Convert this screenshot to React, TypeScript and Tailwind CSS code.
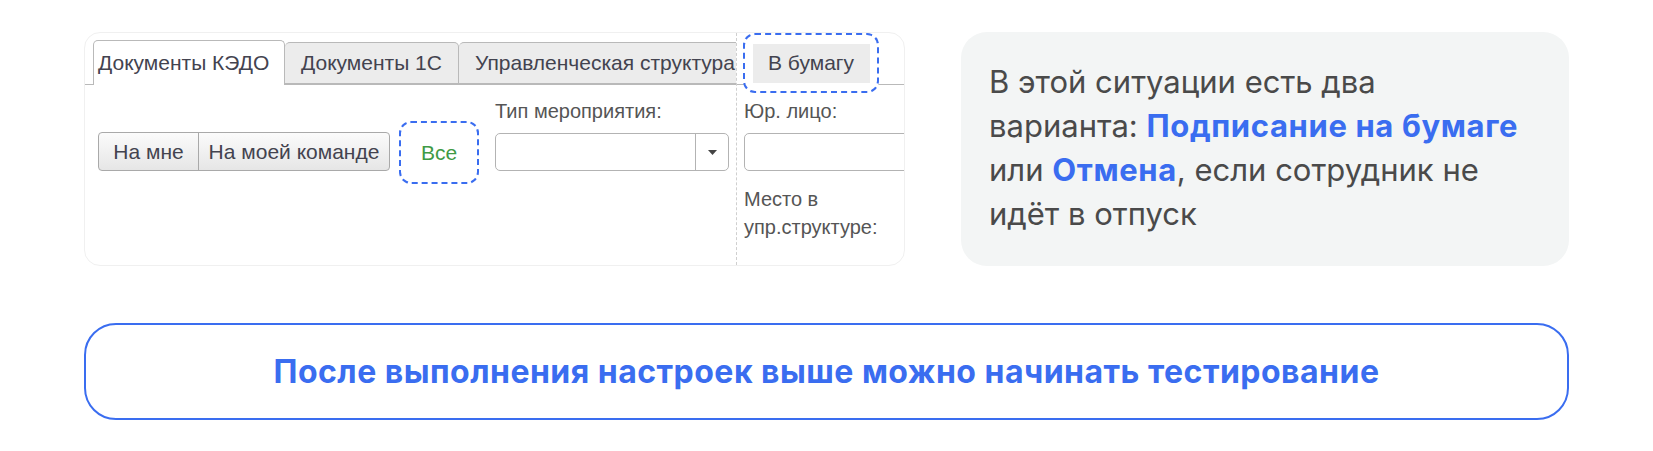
const Tab = ({ label, active, className = "" }: { label: string; active?: boolean; className?: string }) => (
  <div
    className={
      active
        ? `relative z-10 -mb-px flex h-[45px] items-center whitespace-nowrap rounded-t-[5px] border border-b-0 border-[#b9b9b9] bg-white pl-[4px] ${className}`
        : `flex h-[42px] items-center overflow-hidden whitespace-nowrap rounded-t-[5px] border border-l-0 border-[#b9b9b9] bg-[#ececec] ${className}`
    }
  >
    {label}
  </div>
);

const OneCScreen = () => {
  return (
    <div className="flex h-[234px] w-[821px] shrink-0 overflow-hidden rounded-[16px] border border-[#f0f0f0] bg-white font-['Liberation_Sans',Arial,sans-serif] text-[21px] text-[#43434f]">
      {/* left side: tabs + filters */}
      <div className="flex w-[651px] shrink-0 flex-col">
        <div className="flex h-[52px] items-end border-b border-[#b9b9b9] pl-[8px]">
          <Tab label="Документы КЭДО" active className="w-[192px]" />
          <Tab label="Документы 1С" className="w-[174px] pl-[16px]" />
          <Tab label="Управленческая структура" className="min-w-0 flex-1 rounded-tr-none border-r-0 pl-[16px]" />
        </div>
        <div className="flex items-start pl-[13px] pt-[10px]">
          <div className="mt-[37px] flex h-[39px] rounded-[4px] border border-[#a9a9a9] bg-gradient-to-b from-[#fbfbfb] to-[#e6e6e6]">
            <div className="flex w-[100px] items-center justify-center border-r border-[#a9a9a9]">На мне</div>
            <div className="flex w-[190px] items-center justify-center whitespace-nowrap">На моей команде</div>
          </div>
          <div className="ml-[9px] mt-[26px] flex h-[63px] w-[80px] shrink-0 items-center justify-center rounded-[12px] border-[2.5px] border-dashed border-[#3a6df0] text-[#3f9a45]">
            Все
          </div>
          <div className="ml-[16px] mt-[6px] flex flex-col">
            <div className="h-[20px] whitespace-nowrap text-[20px] leading-[20px] text-[#555]">Тип мероприятия:</div>
            <div className="mt-[12px] flex h-[38px] w-[234px] rounded-[5px] border border-[#b3b3b3] bg-white">
              <div className="flex-1" />
              <div className="flex w-[33px] items-center justify-center border-l border-[#b3b3b3]">
                <svg width="9" height="5" viewBox="0 0 9 5">
                  <path d="M0 0h9L4.5 5z" fill="#444" />
                </svg>
              </div>
            </div>
          </div>
        </div>
      </div>

      {/* right side: separator + fields */}
      <div className="flex min-w-0 flex-1 flex-col border-l border-dashed border-[#cfcfcf]">
        <div className="flex h-[52px] items-start border-b border-[#b9b9b9] pl-[6px]">
          <div className="relative z-10 flex h-[60px] w-[136px] shrink-0 items-center justify-center rounded-[12px] border-[2.5px] border-dashed border-[#3a6df0] bg-white">
            <div className="flex h-[39px] w-[117px] items-center justify-center whitespace-nowrap bg-[#ececec]">В бумагу</div>
          </div>
        </div>
        <div className="flex flex-col pl-[7px] pt-[16px]">
          <div className="h-[20px] text-[20px] leading-[20px] text-[#555]">Юр. лицо:</div>
          <div className="mt-[12px] h-[38px] w-[220px] shrink-0 rounded-[5px] border border-[#b3b3b3]" />
          <div className="mt-[14px] whitespace-nowrap text-[20px] leading-[28px] text-[#555]">
            Место в
            <br />
            упр.структуре:
          </div>
        </div>
      </div>
    </div>
  );
};

export default function App() {
  return (
    <div className="min-h-screen bg-white font-['Inter',sans-serif]">
      <div className="w-[1569px] pl-[84px] pt-[32px]">
        <div className="flex gap-[56px]">
          <OneCScreen />
          <div className="h-[234px] w-[608px] shrink-0 rounded-[26px] bg-[#f3f5f5] pl-[28px] pt-[28px] text-[31px] leading-[44px] whitespace-nowrap text-[#4a4a4a]">
            В этой ситуации есть два
            <br />
            варианта: <span className="font-bold tracking-[0.02em] text-[#3a6df0]">Подписание на бумаге</span>
            <br />
            или <span className="font-bold tracking-[0.02em] text-[#3a6df0]">Отмена</span>, если сотрудник не
            <br />
            идёт в отпуск
          </div>
        </div>
        <div className="mt-[57px] flex h-[97px] items-center justify-center rounded-[32px] border-2 border-[#3a6df0] text-[32px] font-bold tracking-[0.015em] text-[#3a6df0]">
          После выполнения настроек выше можно начинать тестирование
        </div>
      </div>
    </div>
  );
}
